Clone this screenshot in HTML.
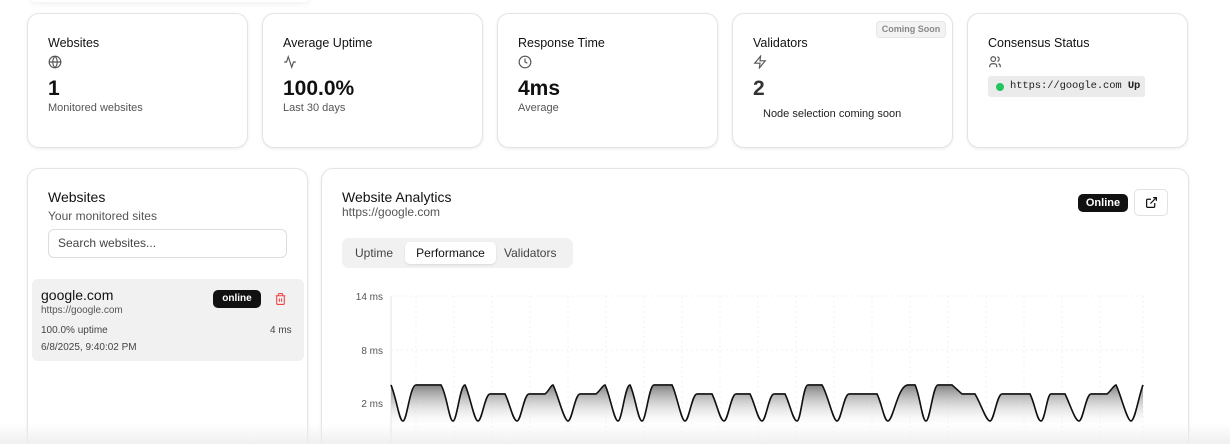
<!DOCTYPE html>
<html style="width:1230px;height:444px;overflow:hidden"><head><meta charset="utf-8"><style>
*{box-sizing:border-box;margin:0;padding:0}
body{width:1230px;height:444px;background:#fff;font-family:"Liberation Sans",sans-serif;color:#111;position:relative;overflow:hidden}
#wrap{position:absolute;left:0;top:0;width:1230px;height:444px;overflow:hidden}
.card{position:absolute;background:#fff;border:1px solid #e4e4e4;border-radius:12px;box-shadow:0 1px 3px rgba(0,0,0,.08)}
.t{position:absolute;font-size:12.5px;font-weight:500;color:#111}
.ic{position:absolute}
.big{position:absolute;font-size:21px;font-weight:700}
.sub{position:absolute;font-size:11px;color:#555}
.a{position:absolute;white-space:nowrap}
</style></head><body><div id="wrap">
<div style="position:absolute;left:30px;top:-8px;width:280px;height:10px;box-shadow:0 2px 6px rgba(0,0,0,.06);border-radius:8px"></div>

<div class="card" style="left:27px;top:13px;width:221px;height:135px">
 <div class="t" style="left:20px;top:22px">Websites</div>
 <svg class="ic" style="left:20px;top:41px" width="14" height="14" viewBox="0 0 24 24" fill="none" stroke="#555" stroke-width="2"><circle cx="12" cy="12" r="10"/><path d="M2 12h20M12 2a15 15 0 0 1 0 20M12 2a15 15 0 0 0 0 20"/></svg>
 <div class="big" style="left:20px;top:63px">1</div>
 <div class="sub" style="left:20px;top:88px">Monitored websites</div>
</div>
<div class="card" style="left:262px;top:13px;width:221px;height:135px">
 <div class="t" style="left:20px;top:22px">Average Uptime</div>
 <svg class="ic" style="left:20px;top:41px" width="14" height="14" viewBox="0 0 24 24" fill="none" stroke="#555" stroke-width="2"><path d="M22 12h-4l-3 9L9 3l-3 9H2"/></svg>
 <div class="big" style="left:20px;top:63px">100.0%</div>
 <div class="sub" style="left:20px;top:88px">Last 30 days</div>
</div>
<div class="card" style="left:497px;top:13px;width:221px;height:135px">
 <div class="t" style="left:20px;top:22px">Response Time</div>
 <svg class="ic" style="left:20px;top:41px" width="14" height="14" viewBox="0 0 24 24" fill="none" stroke="#555" stroke-width="2"><circle cx="12" cy="12" r="10"/><path d="M12 6v6l4 2"/></svg>
 <div class="big" style="left:20px;top:63px">4ms</div>
 <div class="sub" style="left:20px;top:88px">Average</div>
</div>
<div class="card" style="left:732px;top:13px;width:221px;height:135px">
 <div class="a" style="left:143px;top:7px;width:70px;height:17px;background:#f3f3f3;border:1px solid #e6e6e6;border-radius:4px;font-size:9px;color:#888;font-weight:700;text-align:center;line-height:15px">Coming Soon</div>
 <div class="t" style="left:20px;top:22px">Validators</div>
 <svg class="ic" style="left:20px;top:41px" width="14" height="14" viewBox="0 0 24 24" fill="none" stroke="#555" stroke-width="2"><path d="M13 2L3 14h9l-1 8 10-12h-9l1-8z"/></svg>
 <div class="big" style="left:20px;top:63px;color:#333">2</div>
 <div class="a" style="left:30px;top:94px;font-size:11px;color:#222">Node selection coming soon</div>
</div>
<div class="card" style="left:967px;top:13px;width:221px;height:135px">
 <div class="t" style="left:20px;top:22px">Consensus Status</div>
 <svg class="ic" style="left:20px;top:41px" width="14" height="14" viewBox="0 0 24 24" fill="none" stroke="#555" stroke-width="2"><circle cx="9" cy="7" r="4"/><path d="M3 21v-2a4 4 0 0 1 4-4h4a4 4 0 0 1 4 4v2M16 3.1a4 4 0 0 1 0 7.8M21 21v-2a4 4 0 0 0-3-3.9"/></svg>
 <div class="a" style="left:20px;top:62px;width:157px;height:21px;background:#ebebeb;border-radius:3px;font-family:'Liberation Mono',monospace;font-size:10.5px;line-height:21px;padding-left:22px;color:#222;letter-spacing:-0.1px">https://google.com <b>Up</b></div>
 <div class="a" style="left:28px;top:69px;width:8px;height:8px;border-radius:50%;background:#22c55e"></div>
</div>

<div class="card" style="left:27px;top:168px;width:281px;height:290px">
 <div class="a" style="left:20px;top:20px;font-size:14px;font-weight:500">Websites</div>
 <div class="a" style="left:20px;top:40px;font-size:12px;color:#555">Your monitored sites</div>
 <div class="a" style="left:20px;top:60px;width:239px;height:29px;border:1px solid #ddd;border-radius:6px;font-size:12px;color:#444;line-height:27px;padding-left:9px">Search websites...</div>
 <div class="a" style="left:4px;top:110px;width:272px;height:82px;background:#f1f1f1;border-radius:6px">
  <div class="a" style="left:9px;top:8px;font-size:14px;font-weight:500">google.com</div>
  <div class="a" style="left:9px;top:26px;font-size:10px;color:#555">https://google.com</div>
  <div class="a" style="left:9px;top:46px;font-size:10px;color:#444">100.0% uptime</div>
  <div class="a" style="left:9px;top:63px;font-size:10px;color:#444">6/8/2025, 9:40:02 PM</div>
  <div class="a" style="left:238px;top:46px;font-size:10px;color:#444">4 ms</div>
  <div class="a" style="left:181px;top:11px;width:48px;height:18px;background:#111;border-radius:5px;color:#fff;font-size:10px;font-weight:700;text-align:center;line-height:18px">online</div>
  <svg class="a" style="left:242px;top:13px" width="13" height="14" viewBox="0 0 24 24" fill="none" stroke="#ef4444" stroke-width="2"><path d="M3 6h18M19 6v14a2 2 0 0 1-2 2H7a2 2 0 0 1-2-2V6M8 6V4a2 2 0 0 1 2-2h4a2 2 0 0 1 2 2v2M10 11v6M14 11v6"/></svg>
 </div>
</div>

<div class="card" style="left:321px;top:168px;width:868px;height:290px">
 <div class="a" style="left:20px;top:20px;font-size:14px;font-weight:500">Website Analytics</div>
 <div class="a" style="left:20px;top:36px;font-size:12px;color:#555">https://google.com</div>
 <div class="a" style="left:756px;top:25px;width:50px;height:18px;background:#111;border-radius:5px;color:#fff;font-size:11px;font-weight:700;text-align:center;line-height:18px">Online</div>
 <div class="a" style="left:812px;top:20px;width:34px;height:27px;border:1px solid #e2e2e2;border-radius:5px"></div>
 <svg class="a" style="left:823px;top:27px" width="13" height="13" viewBox="0 0 24 24" fill="none" stroke="#111" stroke-width="2.2"><path d="M15 3h6v6M10 14L21 3M18 13v6a2 2 0 0 1-2 2H5a2 2 0 0 1-2-2V8a2 2 0 0 1 2-2h6"/></svg>
 <div class="a" style="left:20px;top:69px;width:231px;height:30px;background:#f1f1f1;border-radius:7px"></div>
 <div class="a" style="left:33px;top:77px;font-size:12px;color:#444">Uptime</div>
 <div class="a" style="left:83px;top:73px;width:91px;height:22px;background:#fff;border-radius:5px;box-shadow:0 1px 2px rgba(0,0,0,.1);font-size:12px;text-align:center;line-height:22px;color:#111">Performance</div>
 <div class="a" style="left:182px;top:77px;font-size:12px;color:#444">Validators</div>
</div>

<svg style="position:absolute;left:0;top:0" width="1230" height="444">
 <defs><linearGradient id="g" x1="0" y1="385" x2="0" y2="428" gradientUnits="userSpaceOnUse"><stop offset="0" stop-color="#808080"/><stop offset="1" stop-color="#fff" stop-opacity="0"/></linearGradient></defs>
 <g font-family="Liberation Sans" font-size="10" fill="#555" text-anchor="end">
  <text x="383" y="300">14 ms</text><text x="383" y="354">8 ms</text><text x="383" y="407">2 ms</text>
 </g>
 <g stroke="#f2f2f2" stroke-dasharray="2 3">
  <path d="M391 296H1143M391 350H1143M391 403H1143"/>
  <path d="M416 296V444M454 296V444M492 296V444M530 296V444M568 296V444M606 296V444M644 296V444M682 296V444M720 296V444M758 296V444M796 296V444M834 296V444M872 296V444M910 296V444M948 296V444M986 296V444M1024 296V444M1062 296V444M1100 296V444M1143 296V444"/>
 </g>
 <path d="M391 296V444" stroke="#e4e4e4"/>
 <path id="w" d="M391 385 C397 400 399 421 403 421 C407 421 410 385 416 385 L441 385 C447 395 449 421 453 421 C457 421 460 385 465 385 C470 395 474 421 478 421 C482 421 485 394 490 394 L505 394 C510 404 513 421 517 421 C521 421 524 394 529 394 L545 394 C549 391 551 385 553 385 C558 395 564 421 568 421 C572 421 575 394 580 394 L596 394 C600 391 603 385 605 385 C610 395 614 421 618 421 C622 421 625 385 630 385 C635 395 638 421 642 421 C646 421 649 385 654 385 L672 385 C677 395 681 421 685 421 C689 421 692 394 697 394 L712 394 C717 404 720 421 724 421 C728 421 731 394 736 394 L750 394 C755 404 758 421 762 421 C766 421 769 394 774 394 L785 394 C790 404 793 421 797 421 C801 421 803 385 808 385 L822 385 C828 395 833 421 837 421 C841 421 844 394 849 394 L877 394 C882 404 884 421 888 421 C893 421 898 385 908 385 L915 385 C920 395 922 421 926 421 C930 421 933 385 938 385 L952 385 L962 394 L975 394 C981 404 986 421 990 421 C994 421 997 394 1002 394 L1030 394 C1035 404 1037 421 1041 421 C1045 421 1047 394 1051 394 L1065 394 C1070 404 1075 421 1079 421 C1083 421 1086 394 1091 394 L1107 394 C1111 391 1114 385 1116 385 C1121 395 1127 421 1131 421 C1135 421 1139 395 1143 385" fill="none" stroke="#111" stroke-width="1.5"/>
 <path d="M391 385 C397 400 399 421 403 421 C407 421 410 385 416 385 L441 385 C447 395 449 421 453 421 C457 421 460 385 465 385 C470 395 474 421 478 421 C482 421 485 394 490 394 L505 394 C510 404 513 421 517 421 C521 421 524 394 529 394 L545 394 C549 391 551 385 553 385 C558 395 564 421 568 421 C572 421 575 394 580 394 L596 394 C600 391 603 385 605 385 C610 395 614 421 618 421 C622 421 625 385 630 385 C635 395 638 421 642 421 C646 421 649 385 654 385 L672 385 C677 395 681 421 685 421 C689 421 692 394 697 394 L712 394 C717 404 720 421 724 421 C728 421 731 394 736 394 L750 394 C755 404 758 421 762 421 C766 421 769 394 774 394 L785 394 C790 404 793 421 797 421 C801 421 803 385 808 385 L822 385 C828 395 833 421 837 421 C841 421 844 394 849 394 L877 394 C882 404 884 421 888 421 C893 421 898 385 908 385 L915 385 C920 395 922 421 926 421 C930 421 933 385 938 385 L952 385 L962 394 L975 394 C981 404 986 421 990 421 C994 421 997 394 1002 394 L1030 394 C1035 404 1037 421 1041 421 C1045 421 1047 394 1051 394 L1065 394 C1070 404 1075 421 1079 421 C1083 421 1086 394 1091 394 L1107 394 C1111 391 1114 385 1116 385 C1121 395 1127 421 1131 421 C1135 421 1139 395 1143 385 L1143 444 L391 444Z" fill="url(#g)"/>
 <use href="#w"/>
</svg>
<div style="position:absolute;left:0;top:424px;width:1230px;height:20px;background:linear-gradient(rgba(240,240,240,0),rgba(238,238,238,.9))"></div>
</div></body></html>
